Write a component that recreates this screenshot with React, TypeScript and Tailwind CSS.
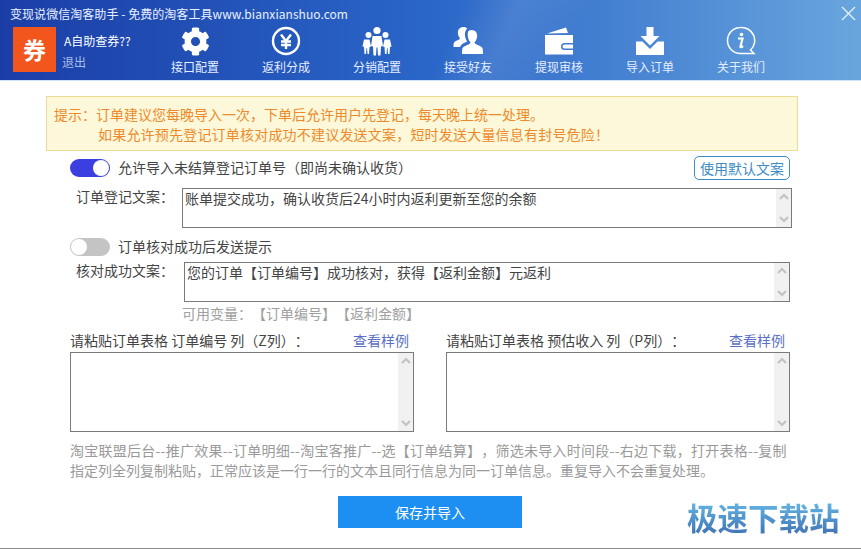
import { ReactNode } from "react"
import { FaCog } from "react-icons/fa"

const FONT = "font-['Microsoft_YaHei','Noto_Sans_CJK_SC','Noto_Sans',sans-serif]"

function GearIcon() {
  return <FaCog className="w-[29px] h-[29px] text-white" />
}

function YenIcon() {
  return (
    <svg width="30" height="30" viewBox="0 0 30 30" fill="none" stroke="#fff">
      <circle cx="15" cy="15" r="13" strokeWidth="2.4" />
      <path d="M10 8.5l5 6.5 5-6.5M15 15v8M10 15.5h10M10 19h10" strokeWidth="2.4" />
    </svg>
  )
}

function TeamIcon() {
  return (
    <svg width="30" height="30" viewBox="0 0 30 30" fill="#fff">
      <circle cx="15" cy="4.5" r="3.6" />
      <circle cx="6.5" cy="9" r="3" />
      <circle cx="23.5" cy="9" r="3" />
      <path d="M10.5 10h9l1.500 10-2 .5-.5 9h-2.500l-.5-8h-1l-.5 8h-2.500l-.5-9-2-.5z" />
      <path d="M2 13.500h5.500l1.500 7-1.500.5-.5 7h-1.500l-.5-6h-.5l-.5 6H2.500L2 21l-1.500-.5z" />
      <path d="M22.500 13.500H28l1.500 7L28 21l-.5 7H26l-.5-6H25l-.5 6H23l-.5-7-1.500-.5z" />
    </svg>
  )
}

function FriendIcon() {
  return (
    <svg width="30" height="30" viewBox="0 0 30 30" fill="#fff">
      <path d="M18.500 4c3.800 0 6 2.800 5.600 6.500-.2 2.200-1 4-2.100 5.300-.6.800-.4 1.700.6 2.200 2.600 1.200 6.400 2.500 7 4.500.3 1.100.4 3.400.4 5.500H9c0-2.100.1-4.400.4-5.500.6-2 4.400-3.300 7-4.500 1-.5 1.200-1.400.6-2.200-1.100-1.300-1.900-3.100-2.100-5.300C14.500 6.800 14.700 4 18.500 4z" />
      <path d="M10.500 1c1.600 0 2.900.6 3.800 1.600-1.800 1.400-2.600 4-2.300 7 .2 2.300 1 4.300 2.100 5.800-2.500 1.200-6.100 2.500-7 5.500H.5c0-1.700.1-3.200.3-4 .5-1.600 3.300-2.600 5.300-3.500.8-.4.900-1.100.4-1.800C5.700 10.600 5 9 4.900 7.300 4.600 3.400 7 1 10.500 1z" />
    </svg>
  )
}

function WalletIcon() {
  return (
    <svg width="30" height="28" viewBox="0 0 30 28" fill="#fff" fillRule="evenodd">
      <path d="M3 6.500 22 .5l2 5.500z" />
      <path d="M1 8h28v8h-8.500a3.500 3.500 0 0 0 0 7H29v4.500H1zM29 17.500v4h-8.500a2 2 0 0 1 0-4z" />
      <circle cx="21" cy="19.500" r="1.500" />
    </svg>
  )
}

function ImportIcon() {
  return (
    <svg width="30" height="30" viewBox="0 0 30 30" fill="#fff">
      <path d="M11.500 1h7v9h6L15 19.500 5.500 10h6z" />
      <path d="M1 15.500h6.500L15 23l7.500-7.500H29V29H1z" />
    </svg>
  )
}

function InfoIcon() {
  return (
    <svg width="30" height="30" viewBox="0 0 30 30" fill="none" stroke="#fff">
      <path d="M14.500 1.500a13 13 0 1 0 0 26h13.500l-3.500-3.500a13 13 0 0 0-10-22.500z" strokeWidth="1.500" />
      <circle cx="15.500" cy="8.500" r="1.800" fill="#fff" stroke="none" />
      <path d="M12 12.500h4.500l-2 8c-.2 1 .5 1 2.500-.5" strokeWidth="2.200" />
    </svg>
  )
}

const NAV: { label: string; icon: ReactNode }[] = [
  { label: "接口配置", icon: <GearIcon /> },
  { label: "返利分成", icon: <YenIcon /> },
  { label: "分销配置", icon: <TeamIcon /> },
  { label: "接受好友", icon: <FriendIcon /> },
  { label: "提现审核", icon: <WalletIcon /> },
  { label: "导入订单", icon: <ImportIcon /> },
  { label: "关于我们", icon: <InfoIcon /> },
]

function Toggle({ on }: { on: boolean }) {
  return (
    <div className={`w-10 h-[18px] rounded-full flex items-center px-px shrink-0 ${on ? "bg-[#3b3fe0] justify-end" : "bg-[#c4c4c4] justify-start"}`}>
      <div className="w-4 h-4 rounded-full bg-white" />
    </div>
  )
}

function ScrollTrack() {
  return (
    <div className="w-[15px] shrink-0 bg-[#f1f1f1] flex flex-col justify-between items-center py-1">
      <svg width="10" height="7" viewBox="0 0 10 7" fill="none" stroke="#c2c2c2" strokeWidth="2"><path d="M1 6l4-4 4 4" /></svg>
      <svg width="10" height="7" viewBox="0 0 10 7" fill="none" stroke="#c2c2c2" strokeWidth="2"><path d="M1 1l4 4 4-4" /></svg>
    </div>
  )
}

function TextBox({ text, className }: { text?: string; className: string }) {
  return (
    <div className={`flex border border-[#7a7a7a] bg-white ${className}`}>
      <div className="flex-1 pl-[2px] pr-[3px] text-sm leading-[18px] text-[#444] whitespace-nowrap">{text}</div>
      <ScrollTrack />
    </div>
  )
}

function PasteColumn({ title }: { title: string }) {
  return (
    <div className="w-[344px] flex flex-col">
      <div className="h-[21px] flex justify-between items-start text-sm leading-[18px] text-[#444]">
        <span>{title}</span>
        <span className="text-[#5a6fc4] pr-[5px]">查看样例</span>
      </div>
      <TextBox className="h-20" />
    </div>
  )
}

export default function App() {
  return (
    <div className={`relative w-[861px] h-[549px] overflow-hidden bg-white border-b border-[#8a8a8a] [text-spacing-trim:space-all] ${FONT}`}>
      <header className="relative h-[81px] bg-[linear-gradient(115deg,transparent_52%,rgba(255,255,255,.1)_58%,transparent_66%),linear-gradient(90deg,#1b3ea6,#2a66c8_50%,#69a5dd)] border-b border-[#cfe2f5]">
        <div className="pl-[10px] pt-[6px] h-[27px] text-xs leading-4 tracking-[0.05px] text-[#e8f0ff] whitespace-nowrap">变现说微信淘客助手 - 免费的淘客工具www.bianxianshuo.com</div>
        <div className="flex pl-[13px]">
          <div className="w-[43px] h-[45px] bg-[#f2561d] flex items-center justify-center text-white text-[23px] font-bold">券</div>
          <div className="w-[115px] pl-[6px]">
            <div className="pl-[2px] pt-[6px] text-xs leading-4 text-white">A自助查券??</div>
            <div className="mt-[5px] text-xs leading-4 text-[#a9bde8]">退出</div>
          </div>
          <nav className="flex gap-[43px] -mt-px">
            {NAV.map(item => (
              <div key={item.label} className="w-12 flex flex-col items-center">
                <div className="h-[30px] flex items-center justify-center">{item.icon}</div>
                <div className="mt-[3px] text-xs leading-4 text-[#e6eeff] whitespace-nowrap">{item.label}</div>
              </div>
            ))}
          </nav>
        </div>
      </header>
      <svg className="absolute right-[5px] top-[6px]" width="15" height="15" viewBox="0 0 15 15" stroke="#e8f2ff" strokeWidth="1.300"><path d="M1 1l13 13M14 1L1 14" /></svg>

      <main className="pl-[46px] pr-[63px] pt-[15px]">
        <div className="h-[55px] bg-[#fdf8d9] border border-[#eedb96] pl-[7px] pt-[7px] text-sm leading-5 text-[#ee8a2b] whitespace-nowrap">
          <div>提示：订单建议您每晚导入一次，下单后允许用户先登记，每天晚上统一处理。</div>
          <div className="pl-[44px] tracking-[0.2px]">如果允许预先登记订单核对成功不建议发送文案，短时发送大量信息有封号危险！</div>
        </div>

        <div className="pl-6 pr-2 mt-[5px] text-[#444]">
          <div className="flex items-center gap-2 h-[24px]">
            <Toggle on />
            <span className="text-sm leading-[18px] flex-1 -mt-[2px]">允许导入未结算登记订单号（即尚未确认收货）</span>
            <div className="w-24 h-6 rounded-[5px] border border-[#3d8cc4] flex items-center justify-center text-sm text-[#3d8cc4]">使用默认文案</div>
          </div>

          <div className="flex mt-2">
            <div className="w-28 pl-[6px] text-sm leading-4">订单登记文案：</div>
            <TextBox className="w-[610px] h-10 -mr-[2px]" text="账单提交成功，确认收货后24小时内返利更新至您的余额" />
          </div>

          <div className="flex items-center gap-2 h-[18px] mt-[10px]">
            <Toggle on={false} />
            <span className="text-sm leading-[18px] -mt-[3px]">订单核对成功后发送提示</span>
          </div>

          <div className="flex mt-[6px]">
            <div className="w-[114px] pl-[6px] text-sm leading-4">核对成功文案：</div>
            <TextBox className="w-[606px] h-10" text="您的订单【订单编号】成功核对，获得【返利金额】元返利" />
          </div>

          <div className="pl-28 mt-[1px] h-[22px] text-sm leading-5 text-[#a0a0a0]">可用变量：【订单编号】【返利金额】</div>

          <div className="flex gap-8 mt-[6px]">
            <PasteColumn title="请粘贴订单表格 订单编号 列（Z列）：" />
            <PasteColumn title="请粘贴订单表格 预估收入 列（P列）：" />
          </div>

          <div className="mt-[8px] w-[720px] text-sm leading-5 text-[#9a9a9a] whitespace-nowrap">
            <div className="tracking-[0.25px]">淘宝联盟后台--推广效果--订单明细--淘宝客推广--选【订单结算】，筛选未导入时间段--右边下载，打开表格--复制</div>
            <div>指定列全列复制粘贴，正常应该是一行一行的文本且同行信息为同一订单信息。重复导入不会重复处理。</div>
          </div>

          <div className="flex mt-4 pl-[268px]">
            <div className="w-[184px] h-8 bg-[#1d8ff2] flex items-center justify-center text-sm text-white">保存并导入</div>
          </div>
        </div>
      </main>

      <div className="absolute left-[687px] top-[497px] text-[30.500px] leading-10 font-bold bg-gradient-to-b from-[#69c0ea] to-[#3f6fb2] bg-clip-text text-transparent whitespace-nowrap">极速下载站</div>
    </div>
  )
}
